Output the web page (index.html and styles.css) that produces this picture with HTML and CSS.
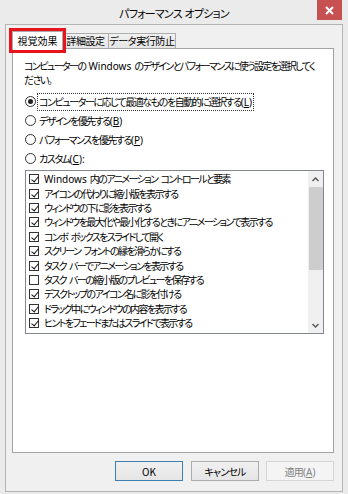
FILE: index.html
```html
<!DOCTYPE html>
<html lang="ja">
<head>
<meta charset="utf-8">
<title>パフォーマンス オプション</title>
<link rel="stylesheet" href="styles.css">
</head>
<body>
<div class="window">
  <div class="titlebar">
    <div class="title">パフォーマンス オプション</div>
    <div class="close">
      <svg width="9" height="9" viewBox="0 0 9 9"><path d="M1 1L8 8M8 1L1 8" stroke="#fff" stroke-width="2" fill="none"/></svg>
    </div>
  </div>
  <div class="client">
    <div class="tabs">
      <div class="tab selected">視覚効果</div>
      <div class="tab t2">詳細設定</div>
      <div class="tab t3">データ実行防止</div>
    </div>
    <div class="panel">
      <p class="desc">コンピューターの <span class="latin">Windows</span> のデザインとパフォーマンスに使う設定を選択してく<br>ださい。</p>
      <div class="radios">
        <div class="radio-row"><span class="radio checked"></span><span class="label focus">コンピューターに応じて最適なものを自動的に選択する<span class="key">(<u>L</u>)</span></span></div>
        <div class="radio-row"><span class="radio"></span><span class="label">デザインを優先する<span class="key">(<u>B</u>)</span></span></div>
        <div class="radio-row"><span class="radio"></span><span class="label">パフォーマンスを優先する<span class="key">(<u>P</u>)</span></span></div>
        <div class="radio-row"><span class="radio"></span><span class="label">カスタム<span class="key">(<u>C</u>):</span></span></div>
      </div>
      <div class="listbox">
        <ul class="items">
          <li><span class="check on"></span><span class="latin">Windows</span> 内のアニメーション コントロールと要素</li>
          <li><span class="check on"></span>アイコンの代わりに縮小版を表示する</li>
          <li><span class="check on"></span>ウィンドウの下に影を表示する</li>
          <li><span class="check on"></span>ウィンドウを最大化や最小化するときにアニメーションで表示する</li>
          <li><span class="check on"></span>コンボ ボックスをスライドして開く</li>
          <li><span class="check on"></span>スクリーン フォントの縁を滑らかにする</li>
          <li><span class="check on"></span>タスク バーでアニメーションを表示する</li>
          <li><span class="check"></span>タスク バーの縮小版のプレビューを保存する</li>
          <li><span class="check on"></span>デスクトップのアイコン名に影を付ける</li>
          <li><span class="check on"></span>ドラッグ中にウィンドウの内容を表示する</li>
          <li><span class="check on"></span>ヒントをフェードまたはスライドで表示する</li>
        </ul>
        <div class="scrollbar">
          <div class="sb-btn"><svg width="7" height="5" viewBox="0 0 7 5"><path d="M0.5 4L3.5 1L6.5 4" stroke="#555" stroke-width="1.4" fill="none"/></svg></div>
          <div class="sb-track"><div class="sb-thumb"></div></div>
          <div class="sb-btn"><svg width="7" height="5" viewBox="0 0 7 5"><path d="M0.5 1L3.5 4L6.5 1" stroke="#555" stroke-width="1.4" fill="none"/></svg></div>
        </div>
      </div>
    </div>
    <div class="buttons">
      <button class="btn default">OK</button>
      <button class="btn">キャンセル</button>
      <button class="btn disabled">適用<span class="key">(<u>A</u>)</span></button>
    </div>
  </div>
</div>
</body>
</html>
```
FILE: styles.css
```css
* { box-sizing: border-box; }
html, body { margin: 0; padding: 0; }
body {
  width: 348px;
  height: 494px;
  overflow: hidden;
  background: #ebebeb;
  font-family: "Noto Sans CJK JP", "Noto Sans", sans-serif;
  font-size: 10px;
  color: #000;
  font-feature-settings: "palt";
  letter-spacing: -1.6px;
  word-spacing: 2.5px;
}
.latin {
  letter-spacing: 0;
  font-family: "Noto Sans", sans-serif;
  font-size: 10px;
}
.key {
  letter-spacing: 0;
  font-family: "Noto Sans", sans-serif;
}
.window {
  height: 494px;
  display: flex;
  flex-direction: column;
}
.titlebar {
  height: 24px;
  flex: none;
  display: grid;
  grid-template-columns: 1fr auto;
  align-items: start;
}
.title {
  grid-row: 1;
  grid-column: 1 / -1;
  text-align: center;
  font-size: 11px;
  letter-spacing: -0.8px;
  word-spacing: 1px;
  line-height: 26px;
  color: #000;
}
.close {
  grid-row: 1;
  grid-column: 2;
  justify-self: end;
  margin-right: 6px;
  width: 25px;
  height: 20px;
  background: #c75050;
  display: flex;
  align-items: center;
  justify-content: center;
}
.client {
  flex: 1;
  margin: 0 5px 2px 5px;
  background: #f0f0f0;
  border: 1px solid #b4b4b4;
  padding: 6px 8px 10px 6px;
  display: flex;
  flex-direction: column;
}
.tabs {
  display: flex;
  align-items: flex-end;
  height: 19px;
  margin-bottom: -2px;
  position: relative;
  z-index: 1;
}
.tab {
  height: 15px;
  margin-bottom: 2px;
  border: 1px solid #acacac;
  border-bottom: none;
  background: linear-gradient(#f0f0f0, #e5e5e5);
  line-height: 13px;
  font-size: 10px;
  letter-spacing: -0.4px;
  white-space: nowrap;
  text-align: center;
}
.tab.selected {
  height: 19px;
  margin-bottom: 0;
  width: 51px;
  background: #fff;
  line-height: 17px;
  letter-spacing: 0;
  outline: 3px solid #e8141b;
  position: relative;
  z-index: 2;
}
.tab.t2 { width: 46px; border-left: none; }
.tab.t3 { width: 68px; margin-left: -1px; }
.panel {
  height: 405px;
  flex: none;
  background: #fff;
  border: 1px solid #a3a3a3;
  padding: 10px 0 0 11px;
}
.desc {
  margin: 0;
  line-height: 13px;
  white-space: nowrap;
}
.radios {
  margin-top: 6px;
}
.radio-row {
  height: 19px;
  display: flex;
  align-items: center;
  padding-left: 1px;
  white-space: nowrap;
}
.radio {
  width: 11px;
  height: 11px;
  border: 1px solid #333;
  border-radius: 50%;
  background: #fff;
  margin-right: 1px;
  flex: none;
  display: flex;
  align-items: center;
  justify-content: center;
}
.radio.checked::after {
  content: "";
  width: 5px;
  height: 5px;
  border-radius: 50%;
  background: #222;
}
.label {
  padding: 1px 1px;
  line-height: 13px;
  letter-spacing: -1.45px;
  border: 1px solid transparent;
}
.label.focus {
  border: 1px dotted #333;
}
.listbox {
  margin: 2px 0 0 1px;
  width: 299px;
  height: 164px;
  border: 1px solid #828790;
  display: grid;
  grid-template-columns: 1fr 15px;
  overflow: hidden;
}
.items {
  list-style: none;
  margin: 0;
  padding: 1px 0 0 3px;
  overflow: hidden;
}
.items li {
  height: 14.4px;
  display: flex;
  align-items: center;
  white-space: pre;
  line-height: 14px;
}
.check {
  width: 10px;
  height: 10px;
  border: 1px solid #333;
  background: #fff;
  margin-right: 5px;
  flex: none;
  position: relative;
}
.check.on::after {
  content: "";
  position: absolute;
  left: 2.5px;
  top: 0px;
  width: 3px;
  height: 6px;
  border: solid #111;
  border-width: 0 1.6px 1.6px 0;
  transform: rotate(40deg);
}
.scrollbar {
  background: #f0f0f0;
  display: flex;
  flex-direction: column;
}
.sb-btn {
  height: 16px;
  display: flex;
  align-items: center;
  justify-content: center;
  flex: none;
}
.sb-track {
  flex: 1;
  padding-left: 1px;
}
.sb-thumb {
  height: 83px;
  background: #cdcdcd;
}
.buttons {
  margin-top: 8px;
  display: flex;
  justify-content: flex-end;
  gap: 8px;
}
.btn {
  width: 68px;
  height: 20px;
  padding: 0;
  font-family: inherit;
  font-size: 10px;
  font-feature-settings: "palt";
  letter-spacing: -0.8px;
  color: #000;
  background: linear-gradient(#f0f0f0, #e5e5e5);
  border: 1px solid #acacac;
  border-radius: 0;
}
.btn.default {
  border-color: #3c7fb1;
  letter-spacing: 0;
}
.btn.disabled {
  color: #838383;
  background: #f4f4f4;
  border-color: #d5d5d5;
  margin-left: -1px;
}
```
